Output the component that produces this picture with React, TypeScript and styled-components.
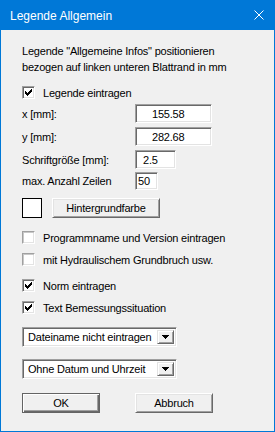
import React from 'react';
import styled, { createGlobalStyle } from 'styled-components';

const GlobalStyle = createGlobalStyle`
  html, body {
    margin: 0;
    padding: 0;
    background: #ffffff;
  }
  body {
    font-family: "Liberation Sans", Arial, sans-serif;
  }
  * {
    box-sizing: border-box;
  }
`;

const CheckMark = () => (
  <svg width="7" height="7" viewBox="0 0 7 7" shapeRendering="crispEdges">
    <path
      d="M0 2h1v3h-1z M1 3h1v3h-1z M2 4h1v3h-1z M3 3h1v3h-1z M4 2h1v3h-1z M5 1h1v3h-1z M6 0h1v3h-1z"
      fill="#000"
    />
  </svg>
);

const ArrowDown = () => (
  <svg width="7" height="4" viewBox="0 0 7 4" shapeRendering="crispEdges">
    <path d="M0 0h7v1h-7z M1 1h5v1h-5z M2 2h3v1h-3z M3 3h1v1h-1z" fill="#000" />
  </svg>
);

const CloseIcon = () => (
  <svg width="10" height="10" viewBox="0 0 10 10">
    <path d="M0.5 0.5L9.5 9.5M9.5 0.5L0.5 9.5" stroke="#fff" strokeWidth="1" />
  </svg>
);

function CheckBox({ label, checked, top }: { label: string; checked?: boolean; top: number }) {
  return (
    <CheckRow $top={top}>
      <Box $checked={!!checked}>{checked && <CheckMark />}</Box>
      <span>{label}</span>
    </CheckRow>
  );
}

function Field({ label, value, width, pad, top, height = 19 }: {
  label: string; value: string; width: number; pad: number; top: number; height?: number;
}) {
  return (
    <FieldRow $top={top} $h={height}>
      <span>{label}</span>
      <Input $w={width} $pad={pad}>{value}</Input>
    </FieldRow>
  );
}

function Combo({ value, top }: { value: string; top: number }) {
  return (
    <ComboBox $top={top}>
      <ComboText>{value}</ComboText>
      <ComboButton>
        <ArrowDown />
      </ComboButton>
    </ComboBox>
  );
}

export default function App() {
  return (
    <>
      <GlobalStyle />
      <Window>
        <TitleBar>
          <span>Legende Allgemein</span>
          <CloseButton>
            <CloseIcon />
          </CloseButton>
        </TitleBar>
        <Body>
          <Intro>
            Legende "Allgemeine Infos" positionieren
            <br />
            bezogen auf linken unteren Blattrand in mm
          </Intro>
          <CheckBox label="Legende eintragen" checked top={8} />
          <Field label="x [mm]:" value="155.58" width={77} pad={16} top={2} />
          <Field label="y [mm]:" value="282.68" width={77} pad={16} top={4} />
          <Field label="Schriftgröße [mm]:" value="2.5" width={41} pad={7} top={4} />
          <Field label="max. Anzahl Zeilen" value="50" width={23} pad={2} top={3} height={18} />
          <ColorRow>
            <Swatch />
            <PushButton $w={108}>Hintergrundfarbe</PushButton>
          </ColorRow>
          <CheckBox label="Programmname und Version eintragen" top={10} />
          <CheckBox label="mit Hydraulischem Grundbruch usw." top={3} />
          <CheckBox label="Norm eintragen" checked top={7} />
          <CheckBox label="Text Bemessungssituation" checked top={3} />
          <Combo value="Dateiname nicht eintragen" top={10} />
          <Combo value="Ohne Datum und Uhrzeit" top={12} />
          <ButtonRow>
            <PushButton $w={78} $default>OK</PushButton>
            <PushButton $w={78}>Abbruch</PushButton>
          </ButtonRow>
        </Body>
      </Window>
    </>
  );
}

const Window = styled.div`
  width: 275px;
  height: 432px;
  border: 1px solid #0078d7;
  background: #f0f0f0;
  display: flex;
  flex-direction: column;
`;

const TitleBar = styled.div`
  height: 29px;
  flex: none;
  background: #0078d7;
  color: #ffffff;
  font-size: 12px;
  display: flex;
  align-items: center;
  justify-content: space-between;
  padding: 1px 10px 0 9px;
`;

const CloseButton = styled.div`
  width: 10px;
  height: 10px;
  display: flex;
  margin-top: -2px;
`;

const Body = styled.div`
  flex: 1;
  display: flex;
  flex-direction: column;
  padding-left: 21px;
  font-size: 11px;
  letter-spacing: -0.2px;
  color: #000000;
`;

const Intro = styled.p`
  margin: 13px 0 0;
  line-height: 16px;
`;

const CheckRow = styled.div<{ $top: number }>`
  display: flex;
  align-items: center;
  gap: 8px;
  height: 19px;
  margin-top: ${p => p.$top}px;
`;

const Box = styled.div<{ $checked: boolean }>`
  width: 13px;
  height: 13px;
  background: #ffffff;
  border: 1px solid;
  border-color: #a0a0a0 #ffffff #ffffff #a0a0a0;
  box-shadow: inset 1px 1px ${p => (p.$checked ? '#696969' : '#c8c8c8')},
    inset -1px -1px #e3e3e3;
  display: flex;
  align-items: center;
  justify-content: center;
`;

const FieldRow = styled.div<{ $top: number; $h: number }>`
  display: grid;
  grid-template-columns: 113px auto;
  align-items: center;
  height: ${p => p.$h}px;
  margin-top: ${p => p.$top}px;
`;

const Input = styled.div<{ $w: number; $pad: number }>`
  width: ${p => p.$w}px;
  height: 100%;
  background: #ffffff;
  border: 1px solid;
  border-color: #a0a0a0 #ffffff #ffffff #a0a0a0;
  box-shadow: inset 1px 1px #696969, inset -1px -1px #e3e3e3;
  padding-left: ${p => p.$pad}px;
  display: flex;
  align-items: center;
`;

const ColorRow = styled.div`
  display: flex;
  align-items: center;
  gap: 10px;
  height: 20px;
  margin-top: 8px;
`;

const Swatch = styled.div`
  width: 20px;
  height: 20px;
  border: 1px solid #000000;
  background: #ffffff;
`;

const PushButton = styled.div<{ $w: number; $default?: boolean }>`
  width: ${p => p.$w}px;
  height: 20px;
  background: #f0f0f0;
  display: flex;
  align-items: center;
  justify-content: center;
  border: 1px solid;
  border-color: ${p => (p.$default ? '#646464' : '#ffffff #696969 #696969 #ffffff')};
  box-shadow: ${p =>
    p.$default
      ? 'inset 1px 1px #ffffff, inset -1px -1px #696969, inset -2px -2px #a0a0a0'
      : 'inset 1px 1px #e3e3e3, inset -1px -1px #a0a0a0'};
`;

const ComboBox = styled.div<{ $top: number }>`
  width: 155px;
  height: 20px;
  margin-top: ${p => p.$top}px;
  background: #ffffff;
  border: 1px solid;
  border-color: #a0a0a0 #ffffff #ffffff #a0a0a0;
  box-shadow: inset 1px 1px #696969, inset -1px -1px #e3e3e3;
  padding: 2px;
  display: flex;
  align-items: stretch;
`;

const ComboText = styled.div`
  flex: 1;
  padding-left: 3px;
  display: flex;
  align-items: center;
`;

const ComboButton = styled.div`
  width: 17px;
  background: #f0f0f0;
  border: 1px solid;
  border-color: #e3e3e3 #696969 #696969 #e3e3e3;
  box-shadow: inset 1px 1px #ffffff, inset -1px -1px #a0a0a0;
  display: flex;
  align-items: center;
  justify-content: center;
`;

const ButtonRow = styled.div`
  display: flex;
  gap: 35px;
  margin-top: 14px;
`;
